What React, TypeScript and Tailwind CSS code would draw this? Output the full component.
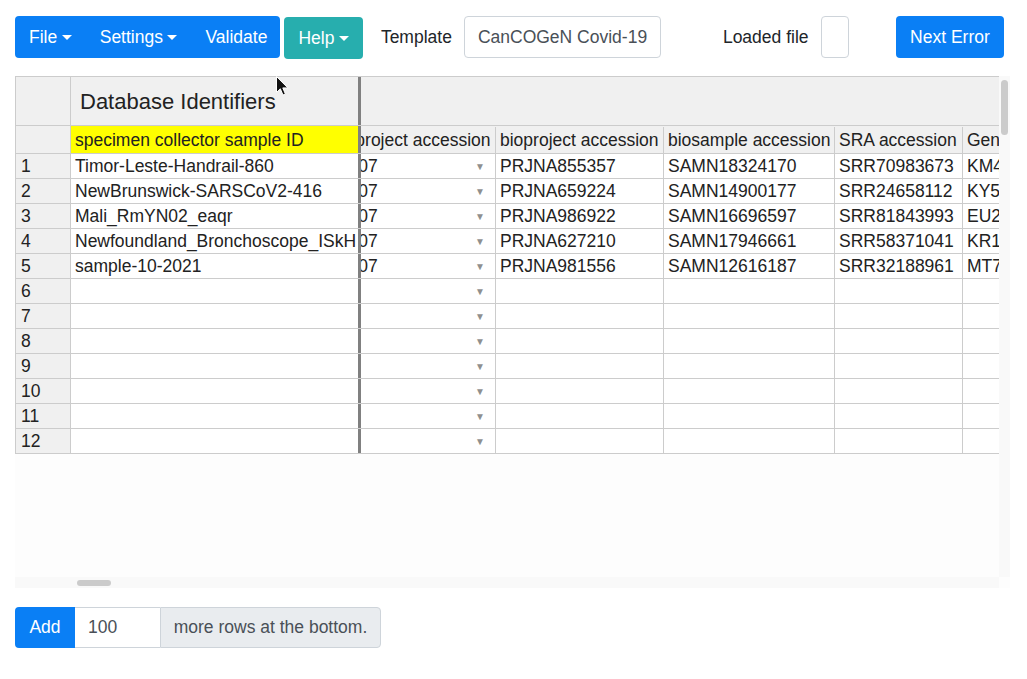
import React from "react";

function Caret() {
  return (
    <span className="ml-[4.5px] inline-block h-0 w-0 border-t-[5.25px] border-x-[5.25px] border-b-0 border-t-white border-x-transparent" />
  );
}

type Row = {
  id: string;
  bio: string;
  sam: string;
  sra: string;
  gen: string;
};

const data: Row[] = [
  { id: "Timor-Leste-Handrail-860", bio: "PRJNA855357", sam: "SAMN18324170", sra: "SRR70983673", gen: "KM457812" },
  { id: "NewBrunswick-SARSCoV2-416", bio: "PRJNA659224", sam: "SAMN14900177", sra: "SRR24658112", gen: "KY593210" },
  { id: "Mali_RmYN02_eaqr", bio: "PRJNA986922", sam: "SAMN16696597", sra: "SRR81843993", gen: "EU226478" },
  { id: "Newfoundland_Bronchoscope_ISkH", bio: "PRJNA627210", sam: "SAMN17946661", sra: "SRR58371041", gen: "KR183345" },
  { id: "sample-10-2021", bio: "PRJNA981556", sam: "SAMN12616187", sra: "SRR32188961", gen: "MT729105" },
];

const rows: (Row | null)[] = [];
for (let i = 0; i < 12; i++) rows.push(i < data.length ? data[i] : null);

export default function App() {
  return (
    <div className="relative min-h-[679px] w-[1027px] bg-white font-['Liberation_Sans',Arial,sans-serif] text-[17.5px] text-[#212529]">
      {/* Toolbar */}
      <div className="ml-[15px] pt-[16px]">
        <div className="flex h-[42px] items-center">
          <div className="flex h-[42px] rounded-[4px] bg-[#0a7ff5] text-white">
            <div className="flex items-center px-[14px]">
              File
              <Caret />
            </div>
            <div className="flex items-center px-[14px]">
              Settings
              <Caret />
            </div>
            <div className="flex items-center pl-[14px] pr-[13px]">Validate</div>
          </div>
          <div className="ml-[4px] flex h-[42px] translate-y-[1px] items-center rounded-[4px] bg-[#27aeae] px-[14px] text-white">
            Help
            <Caret />
          </div>
          <span className="ml-[18px]">Template</span>
          <div className="ml-[12px] flex h-[42px] w-[197px] items-center rounded-[4px] border border-[#ced4da] pl-[13px] text-[#495057]">
            CanCOGeN Covid-19
          </div>
          <span className="ml-[62px]">Loaded file</span>
          <div className="ml-[12px] h-[42px] w-[28px] rounded-[4px] border border-[#ced4da]" />
          <div className="ml-[47px] flex h-[42px] items-center rounded-[4px] bg-[#0a7ff5] px-[14.5px] text-white">
            Next Error
          </div>
        </div>
      </div>

      {/* Grid container */}
      <div className="ml-[15px] mt-[18px] flex h-[512px] w-[995px] flex-col bg-[#fdfdfd] text-[#222]">
        <div className="flex h-[501px]">
          <div className="w-[984px] overflow-hidden">
            {/* group header */}
            <div className="flex h-[50px] border-y border-[#ccc] bg-[#f0f0f0]">
              <div className="w-[56px] shrink-0 border-x border-[#ccc]" />
              <div className="flex w-[290px] shrink-0 items-center border-r-[3px] border-r-[#808080] pl-[9px] text-[22px]">
                Database Identifiers
              </div>
              <div className="flex-1" />
            </div>
            {/* column header */}
            <div className="flex h-[28px] border-b border-[#ccc]">
              <div className="w-[56px] shrink-0 border-x border-[#ccc] bg-[#f0f0f0]" />
              <div className="flex w-[290px] shrink-0 items-center overflow-hidden whitespace-nowrap border-r-[3px] border-r-[#808080] bg-[#ffff00] pl-[4px] pt-[1px]">
                specimen collector sample ID
              </div>
              <div className="w-[638px] shrink-0 overflow-hidden bg-[#f0f0f0] pt-[1px]">
                <div className="ml-[-105px] flex h-full">
                  <div className="flex w-[240px] shrink-0 items-center whitespace-nowrap border-r border-[#ccc] pl-[4px]">
                    umbrella bioproject accession
                  </div>
                  <div className="flex w-[168px] shrink-0 items-center whitespace-nowrap border-r border-[#ccc] pl-[4px]">
                    bioproject accession
                  </div>
                  <div className="flex w-[171px] shrink-0 items-center whitespace-nowrap border-r border-[#ccc] pl-[4px]">
                    biosample accession
                  </div>
                  <div className="flex w-[128px] shrink-0 items-center whitespace-nowrap border-r border-[#ccc] pl-[4px]">
                    SRA accession
                  </div>
                  <div className="flex w-[170px] shrink-0 items-center whitespace-nowrap border-r border-[#ccc] pl-[4px]">
                    GenBank accession
                  </div>
                </div>
              </div>
            </div>
            {/* data rows */}
            {rows.map((r, i) => (
              <div key={i} className="flex h-[25px] border-b border-[#ccc]">
                <div className="flex w-[56px] shrink-0 items-center border-x border-[#ccc] bg-[#f0f0f0] pl-[5px]">
                  {i + 1}
                </div>
                <div className="flex w-[290px] shrink-0 items-center overflow-hidden whitespace-nowrap border-r-[3px] border-r-[#808080] bg-white pl-[4px]">
                  {r ? r.id : ""}
                </div>
                <div className="w-[638px] shrink-0 overflow-hidden bg-white">
                  <div className="ml-[-105px] flex h-full">
                    <div className="flex w-[240px] shrink-0 items-center justify-between whitespace-nowrap border-r border-[#ccc] pl-[6px] pr-[10px]">
                      <span>{r ? "PRJNA623807" : ""}</span>
                      <span className="text-[10px] text-[#8f8f8f]">▼</span>
                    </div>
                    <div className="flex w-[168px] shrink-0 items-center whitespace-nowrap border-r border-[#ccc] pl-[4px]">
                      {r ? r.bio : ""}
                    </div>
                    <div className="flex w-[171px] shrink-0 items-center whitespace-nowrap border-r border-[#ccc] pl-[4px]">
                      {r ? r.sam : ""}
                    </div>
                    <div className="flex w-[128px] shrink-0 items-center whitespace-nowrap border-r border-[#ccc] pl-[4px]">
                      {r ? r.sra : ""}
                    </div>
                    <div className="flex w-[170px] shrink-0 items-center whitespace-nowrap border-r border-[#ccc] pl-[4px]">
                      {r ? r.gen : ""}
                    </div>
                  </div>
                </div>
              </div>
            ))}
          </div>
          {/* vertical scrollbar */}
          <div className="w-[11px] bg-[#f9f9f9] pl-[2px] pt-[4px]">
            <div className="h-[55px] w-[7px] rounded-full bg-[#cbcbcb]" />
          </div>
        </div>
        {/* horizontal scrollbar */}
        <div className="h-[11px] w-[984px] bg-[#f9f9f9] pl-[62px] pt-[3px]">
          <div className="h-[6px] w-[34px] rounded-full bg-[#cbcbcb]" />
        </div>
      </div>

      {/* Add rows */}
      <div className="ml-[15px] mt-[19px] flex h-[41px]">
        <div className="flex w-[60px] items-center justify-center rounded-l-[4px] bg-[#0a7ff5] text-white">
          Add
        </div>
        <div className="flex w-[85px] items-center border-y border-[#ced4da] pl-[13px] text-[#495057]">
          100
        </div>
        <div className="flex w-[221px] items-center justify-center rounded-r-[4px] border border-[#ced4da] bg-[#e9ecef] text-[#495057]">
          more rows at the bottom.
        </div>
      </div>

      {/* mouse cursor */}
      <svg
        className="pointer-events-none absolute left-[276px] top-[76px]"
        width="13"
        height="21"
        viewBox="0 0 13 21"
      >
        <path
          d="M0.5 0.5 L0.5 16.5 L4.3 12.8 L7 19 L9.4 18 L6.8 11.9 L11.8 11.9 Z"
          fill="#111"
          stroke="#fff"
          strokeWidth="1"
        />
      </svg>
    </div>
  );
}
